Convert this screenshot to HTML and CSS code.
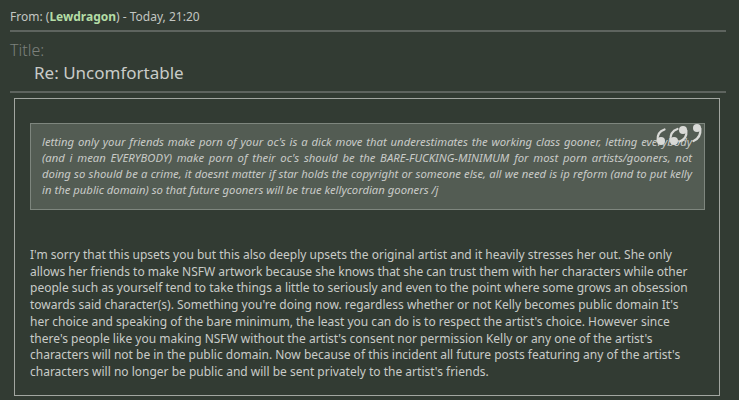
FILE: index.html
```html
<!DOCTYPE html>
<html>
<head>
<meta charset="utf-8">
<link rel="stylesheet" href="styles.css">
</head>
<body>
<div class="post">
  <div class="meta">From: (<span class="user">Lewdragon</span>) - Today, 21:20</div>
  <hr class="rule">
  <div class="title-label">Title:</div>
  <div class="title">Re: Uncomfortable</div>
  <hr class="rule">
  <div class="content">
    <blockquote class="quote">
      <svg class="qmark" width="60" height="32" viewBox="0 0 60 32" aria-hidden="true">
        <g fill="#d9dad7" stroke="#d9dad7" stroke-linecap="round">
          <circle cx="12" cy="23" r="4" stroke="none"/>
          <path d="M8.6 22.5 C8 16 11 13 15.5 11.5" fill="none" stroke-width="2.2"/>
          <circle cx="25" cy="23" r="4" stroke="none"/>
          <path d="M21.6 22.5 C21 16 24 12.5 28.5 11" fill="none" stroke-width="2.2"/>
          <circle cx="34" cy="12" r="4" stroke="none"/>
          <path d="M37.4 12.5 C38 19 35 22 30.5 23.5" fill="none" stroke-width="2.2"/>
          <circle cx="48" cy="10" r="4" stroke="none"/>
          <path d="M51.4 10.5 C52 17 49 21 44.5 23" fill="none" stroke-width="2.2"/>
        </g>
      </svg>
      letting only your friends make porn of your oc's is a dick move that underestimates the working class gooner, letting everybody (and i mean EVERYBODY) make porn of their oc's should be the BARE-FUCKING-MINIMUM for most porn artists/gooners, not doing so should be a crime, it doesnt matter if star holds the copyright or someone else, all we need is ip reform (and to put kelly in the public domain) so that future gooners will be true kellycordian gooners /j
    </blockquote>
    <p class="body">I'm sorry that this upsets you but this also deeply upsets the original artist and it heavily stresses her out. She only allows her friends to make NSFW artwork because she knows that she can trust them with her characters while other people such as yourself tend to take things a little to seriously and even to the point where some grows an obsession towards said character(s). Something you're doing now. regardless whether or not Kelly becomes public domain It's<br>her choice and speaking of the bare minimum, the least you can do is to respect the artist's choice. However since there's people like you making NSFW without the artist's consent nor permission Kelly or any one of the artist's characters will not be in the public domain. Now because of this incident all future posts featuring any of the artist's characters will no longer be public and will be sent privately to the artist's friends.</p>
  </div>
</div>
</body>
</html>
```

FILE: styles.css
```css
html, body {
  margin: 0;
  padding: 0;
  background: #323b33;
}
body {
  font-family: "Noto Sans", sans-serif;
  color: #c9cbc8;
}
.post {
  padding: 0 13px 0 10px;
}
.meta {
  font-size: 12px;
  line-height: 18px;
  padding-top: 8px;
  color: #c3c6c2;
}
.user {
  color: #b4dda6;
  font-weight: 700;
}
.rule {
  border: 0;
  height: 2px;
  background: #5e645f;
  margin: 4px 0 0 0;
}
.title-label {
  font-size: 16px;
  font-weight: 300;
  color: #7c807c;
  line-height: 20px;
  margin-top: 8px;
}
.title {
  font-size: 17px;
  color: #c9cbc8;
  line-height: 22px;
  padding-left: 24px;
  margin-top: 2px;
}
.post .rule + .content {
  margin-top: 5px;
}
.title + .rule {
  margin-top: 7px;
}
.content {
  border: 1px solid #a2a6a1;
  margin: 0 6px 0 4px;
  padding: 24px 14px 14px 15px;
}
.quote {
  position: relative;
  margin: 0;
  background: #535c53;
  border: 1px solid #7e867e;
  padding: 10px 12px 11px 11px;
  font-size: 11.3px;
  line-height: 16px;
  font-style: italic;
  text-align: justify;
  color: #c9cbc8;
}
.qmark {
  position: absolute;
  right: -5px;
  top: -6px;
  display: block;
}
.body {
  margin: 37px 0 0 0;
  font-size: 12px;
  line-height: 16.7px;
  color: #c9cbc8;
}
```
